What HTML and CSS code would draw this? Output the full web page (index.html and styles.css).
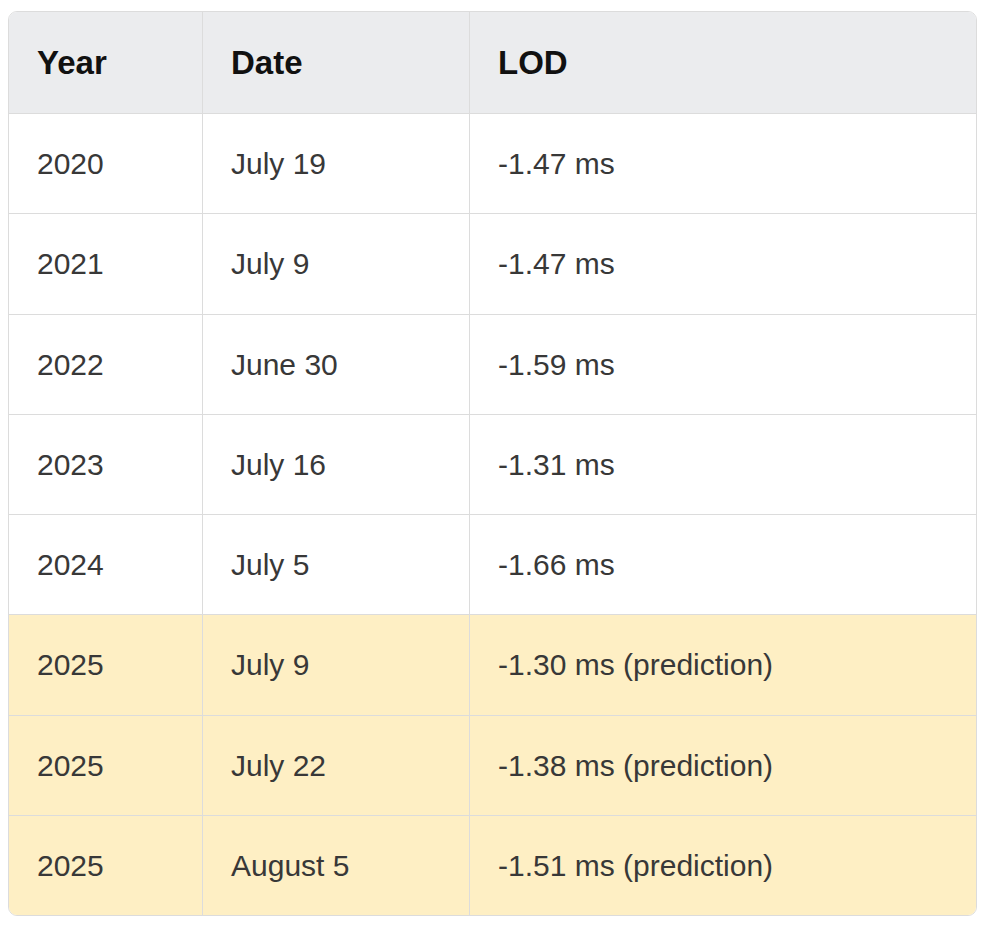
FILE: index.html
```html
<!DOCTYPE html>
<html lang="en">
<head>
<meta charset="utf-8">
<title>LOD table</title>
<link rel="stylesheet" href="styles.css">
</head>
<body>
<div class="table-wrap">
  <table class="lod-table">
    <thead>
      <tr>
        <th class="col-year">Year</th>
        <th class="col-date">Date</th>
        <th class="col-lod">LOD</th>
      </tr>
    </thead>
    <tbody>
      <tr><td>2020</td><td>July 19</td><td>-1.47 ms</td></tr>
      <tr><td>2021</td><td>July 9</td><td>-1.47 ms</td></tr>
      <tr><td>2022</td><td>June 30</td><td>-1.59 ms</td></tr>
      <tr><td>2023</td><td>July 16</td><td>-1.31 ms</td></tr>
      <tr><td>2024</td><td>July 5</td><td>-1.66 ms</td></tr>
      <tr class="prediction"><td>2025</td><td>July 9</td><td>-1.30 ms (prediction)</td></tr>
      <tr class="prediction"><td>2025</td><td>July 22</td><td>-1.38 ms (prediction)</td></tr>
      <tr class="prediction"><td>2025</td><td>August 5</td><td>-1.51 ms (prediction)</td></tr>
    </tbody>
  </table>
</div>
</body>
</html>
```
FILE: styles.css
```css
* {
  box-sizing: border-box;
}

body {
  margin: 0;
  padding: 11px 8px 8px;
  background: #ffffff;
  font-family: "Liberation Sans", Arial, sans-serif;
}

.table-wrap {
  border: 1px solid #dcdcdc;
  border-radius: 9px;
  overflow: hidden;
}

.lod-table {
  width: 100%;
  border-collapse: separate;
  border-spacing: 0;
  table-layout: fixed;
}

.lod-table th,
.lod-table td {
  text-align: left;
  padding: 28px 28px;
  border-right: 1px solid #dcdcdc;
  border-bottom: 1px solid #dcdcdc;
  vertical-align: middle;
}

.lod-table th:last-child,
.lod-table td:last-child {
  border-right: none;
}

.lod-table tbody tr:last-child td {
  border-bottom: none;
}

.lod-table th {
  background: #ebecee;
  color: #111111;
  font-size: 33px;
  font-weight: 700;
  line-height: 45px;
}

.lod-table td {
  color: #383838;
  font-size: 30px;
  font-weight: 400;
  line-height: 43.25px;
}

.col-year {
  width: 194px;
}

.col-date {
  width: 267px;
}

.lod-table tr.prediction td {
  background: #feefc4;
}
```
